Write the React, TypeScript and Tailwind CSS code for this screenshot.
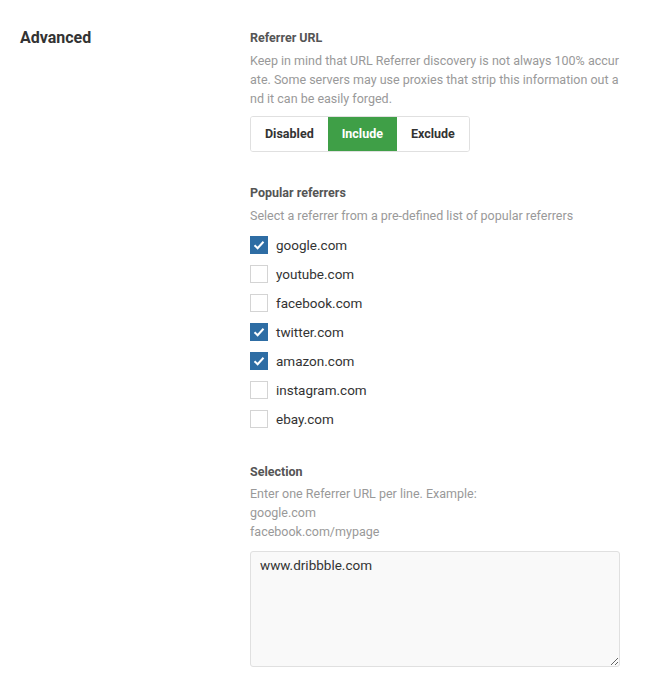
import { useState } from "react";

const referrers = [
  { name: "google.com", checked: true },
  { name: "youtube.com", checked: false },
  { name: "facebook.com", checked: false },
  { name: "twitter.com", checked: true },
  { name: "amazon.com", checked: true },
  { name: "instagram.com", checked: false },
  { name: "ebay.com", checked: false },
];

const modes = ["Disabled", "Include", "Exclude"];

function Check({ checked }: { checked: boolean }) {
  if (checked) {
    return (
      <span className="flex h-[18px] w-[18px] items-center justify-center bg-[#2e6da4]">
        <svg width="12" height="10" viewBox="0 0 12 10" fill="none">
          <path d="M1.5 5.2 4.6 8.2 10.5 1.8" stroke="white" strokeWidth="2" />
        </svg>
      </span>
    );
  }
  return <span className="h-[18px] w-[18px] border border-[#d4d4d4] bg-white" />;
}

export default function App() {
  const [mode, setMode] = useState("Include");
  const [list, setList] = useState(referrers);

  return (
    <div className="flex min-h-[697px] bg-white font-['Roboto',sans-serif] text-[#333]">
      <div className="w-[250px] shrink-0 pl-5 pt-[26px]">
        <h2 className="text-[16px] font-bold text-[#333]">Advanced</h2>
      </div>
      <div className="w-[370px] pt-[30px]">
        <h3 className="text-[12.5px] font-bold leading-[16px] text-[#555]">Referrer URL</h3>
        <p className="mt-[5px] break-all text-[12.5px] leading-[19px] text-[#999]">
          Keep in mind that URL Referrer discovery is not always 100% accurate. Some servers may use proxies that strip this information out and it can be easily forged.
        </p>
        <div className="mt-[8px] flex w-fit overflow-hidden rounded-[3px] border border-[#e0e0e0]">
          {modes.map((m) => (
            <button
              key={m}
              onClick={() => setMode(m)}
              className={`h-[34px] px-[14px] text-[12.5px] font-bold ${
                mode === m ? "bg-[#3f9f47] text-white" : "bg-white text-[#333]"
              }`}
            >
              {m}
            </button>
          ))}
        </div>

        <h3 className="mt-[33px] text-[12.5px] font-bold leading-[16px] text-[#555]">Popular referrers</h3>
        <p className="mt-[5px] text-[12.5px] leading-[19px] text-[#999]">
          Select a referrer from a pre-defined list of popular referrers
        </p>
        <div className="mt-[11px] flex flex-col gap-[11px]">
          {list.map((r, i) => (
            <label
              key={r.name}
              className="flex h-[18px] cursor-pointer items-center gap-2"
              onClick={() => setList(list.map((x, j) => (j === i ? { ...x, checked: !x.checked } : x)))}
            >
              <Check checked={r.checked} />
              <span className="text-[13.5px] text-[#333]">{r.name}</span>
            </label>
          ))}
        </div>

        <h3 className="mt-[36px] text-[12.5px] font-bold leading-[16px] text-[#555]">Selection</h3>
        <p className="mt-[4px] text-[12.5px] leading-[19px] text-[#999]">
          Enter one Referrer URL per line. Example:
          <br />
          google.com
          <br />
          facebook.com/mypage
        </p>
        <textarea
          defaultValue="www.dribbble.com"
          className="mt-[10px] block h-[116px] w-full rounded-[3px] border border-[#e0e0e0] bg-[#f9f9f9] px-[9px] pb-[5px] pt-[3px] text-[13.5px] leading-[20px] text-[#333] outline-none"
        />
      </div>
    </div>
  );
}
